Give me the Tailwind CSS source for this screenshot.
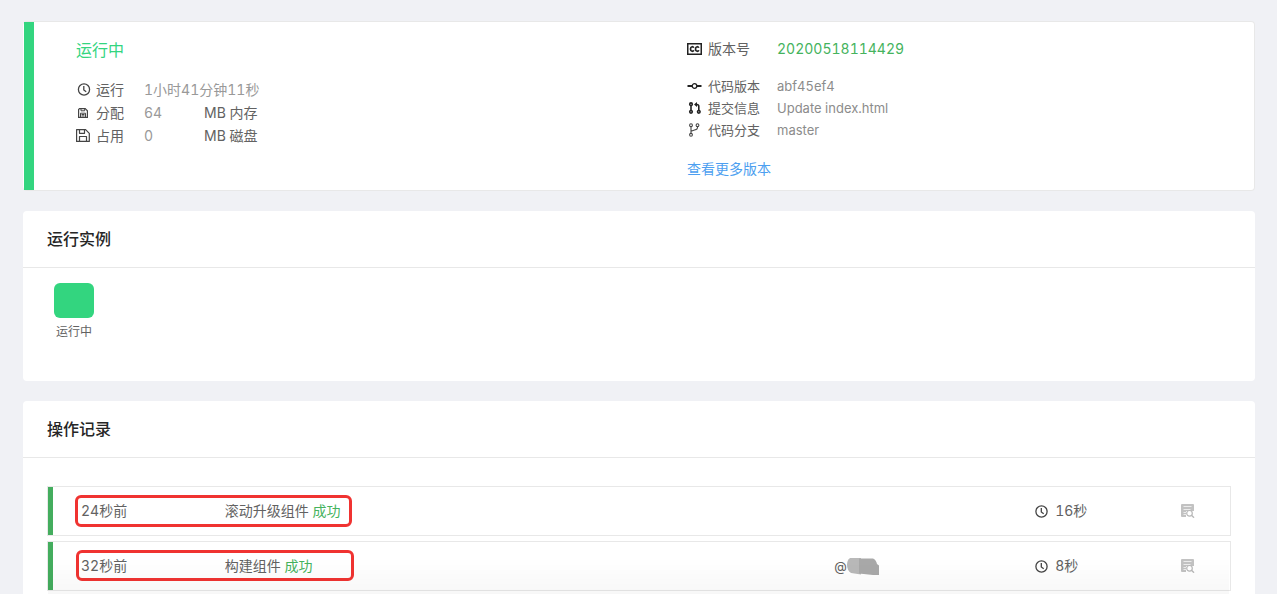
<!DOCTYPE html>
<html lang="zh-CN">
<head>
    <meta charset="UTF-8">
    <meta name="viewport" content="width=device-width, initial-scale=1.0">
    <title>运行实例</title>
    <script src="https://cdn.jsdelivr.net/npm/@tailwindcss/browser@4"></script>
</head>
<body class="bg-[#f0f1f5] font-['Inter','Noto_Sans_CJK_SC',sans-serif] text-sm tabular-nums text-[#626262]">

<!-- shared icons -->
<svg class="hidden">
    <symbol id="icon-clock" viewBox="0 0 13 13">
        <g fill="none" stroke="#444" stroke-width="1.300">
            <circle cx="6.500" cy="6.500" r="5.600"/>
            <path d="M6.300 3v4l2.400 1.800"/>
        </g>
    </symbol>
    <symbol id="icon-search-doc" viewBox="0 0 14 14">
        <path fill="#c2c2c2" d="M1 0h11a1 1 0 0 1 1 1v6H0V1a1 1 0 0 1 1-1zM0 6h5v7H1a1 1 0 0 1-1-1z"/>
        <path fill="none" stroke="#ececec" d="M2.500 2.500h8M2.500 5.500h7M2.500 8.500h2.500M2.500 10.500h2.500"/>
        <circle cx="8.500" cy="9.300" r="2.800" fill="#fff" stroke="#b8b8b8" stroke-width="1.200"/>
        <path fill="none" stroke="#b8b8b8" stroke-width="1.400" d="M10.500 11.300l2.500 2.400"/>
    </symbol>
</svg>

<main class="h-screen overflow-hidden pt-[21px] pl-[23px] pr-[22px] flex flex-col gap-5">

    <section class="shrink-0 grid grid-cols-2 bg-white border border-[#e8e8e8] border-l-0 rounded-sm relative pl-[11px] h-[170px]">
        <span class="absolute left-px inset-y-0 w-[10px] bg-[#33d57f]"></span>
        <div class="pl-[42px] pt-4">
            <h2 class="text-base leading-6 text-[#33d57f]">运行中</h2>
            <ul class="mt-4 leading-[23px]">
                <li class="flex items-center">
                    <svg class="w-4 h-[13px] mr-1"><use href="#icon-clock"/></svg>
                    <span class="w-12">运行</span>
                    <span class="text-[#999]">1小时41分钟11秒</span>
                </li>
                <li class="flex items-center">
                    <svg class="w-[14px] h-[10px] mr-[6px]" viewBox="0 0 10 10" fill="none" stroke="#444">
                        <path stroke-width="1.200" d="M1.500.600h5.700L9.400 2.800v6.600H.600V1.500z"/>
                        <path d="M3 .500v2.300h3.700V.500M2.500 9V5.200h5V9M3.500 6.500h3M3.500 7.900h3"/>
                    </svg>
                    <span class="w-12">分配</span>
                    <span class="w-[60px] text-[#999]">64</span>
                    <span>MB 内存</span>
                </li>
                <li class="flex items-center">
                    <svg class="w-[14px] h-[13px] mr-[6px]" viewBox="0 0 14 13" fill="none" stroke="#444" stroke-width="1.200" stroke-linejoin="round">
                        <path d="M.600.600h9l3.700 3.700v8.100H.600z"/>
                        <path d="M3.500.600v3.700h5V.600M3.500 12.400V7.500h7v4.900"/>
                    </svg>
                    <span class="w-12">占用</span>
                    <span class="w-[60px] text-[#999]">0</span>
                    <span>MB 磁盘</span>
                </li>
            </ul>
        </div>
        <div class="pl-[43px] pt-4">
            <div class="flex items-center leading-[22px]">
                <svg class="w-[15px] h-3 mr-[6px]" viewBox="0 0 15 12" fill="none">
                    <path stroke="#222" stroke-width="1.500" d="M.750.750h13.500v10.500H.750z"/>
                    <path stroke="#222" stroke-width="1.700" d="M6.600 4.900C6.500 3.300 3.500 3 3.500 6s3 2.700 3.100 1.100M11.600 4.900c-.1-1.600-3.100-1.900-3.100 1.100s3 2.700 3.100 1.100"/>
                </svg>
                <span class="w-[69px]">版本号</span>
                <span class="text-[#45b35d]">20200518114429</span>
            </div>
            <ul class="mt-[15px] text-[13px] leading-[22px]">
                <li class="flex items-center">
                    <svg class="w-[15px] h-3 mr-[6px]" viewBox="0 0 15 12" fill="none" stroke="#222">
                        <path stroke-width="1.800" d="M.500 6h4.500M10 6h4.500"/>
                        <circle cx="7.500" cy="6" r="2.300" stroke-width="1.300"/>
                    </svg>
                    <span class="w-[69px]">代码版本</span>
                    <span class="text-[#8c8c8c]">abf45ef4</span>
                </li>
                <li class="flex items-center">
                    <svg class="w-[15px] h-3 mr-[6px]" viewBox="0 0 15 12" fill="none" stroke="#222" stroke-width="1.600">
                        <path d="M4 3v6M8.500 2.500h1.300q2 0 2 2V9"/>
                        <circle cx="4" cy="2.200" r="1.300"/>
                        <circle cx="4" cy="9.800" r="1.300"/>
                        <circle cx="11.800" cy="9.800" r="1.300"/>
                        <path fill="#222" stroke="none" d="M10 0v5L7 2.500z"/>
                    </svg>
                    <span class="w-[69px]">提交信息</span>
                    <span class="text-[#8c8c8c]">Update index.html</span>
                </li>
                <li class="flex items-center">
                    <svg class="w-[15px] h-[14px] mr-[6px]" viewBox="0 0 15 14" fill="none" stroke="#444" stroke-width="1.100">
                        <circle cx="4" cy="2.200" r="1.400"/>
                        <circle cx="4" cy="11.800" r="1.400"/>
                        <circle cx="10.500" cy="2.200" r="1.400"/>
                        <path d="M4 3.600v6.800M10.500 3.600v1q0 1.600-1.600 2L4 8.200"/>
                    </svg>
                    <span class="w-[69px]">代码分支</span>
                    <span class="text-[#8c8c8c]">master</span>
                </li>
            </ul>
            <a href="#" class="inline-block mt-[17px] leading-[22px] text-[#4d9ff0]">查看更多版本</a>
        </div>
    </section>

    <section class="shrink-0 bg-white rounded-sm h-[170px]">
        <h2 class="px-6 py-4 border-b border-[#e8e8e8] text-base leading-6 font-medium text-[#262626]">运行实例</h2>
        <div class="px-[31px] pt-[15px]">
            <div class="w-10 flex flex-col items-center">
                <span class="w-10 h-[35px] rounded-md bg-[#33d57f]"></span>
                <span class="mt-1 text-xs leading-5 whitespace-nowrap">运行中</span>
            </div>
        </div>
    </section>

    <section class="flex-1 bg-white rounded-t-sm">
        <h2 class="px-6 py-4 border-b border-[#e8e8e8] text-base leading-6 font-medium text-[#262626]">操作记录</h2>
        <ul class="px-6 pt-7 flex flex-col gap-[5px]">
            <li class="relative grid grid-cols-[172fr_610fr_201fr_146fr_49fr] items-center h-[50px] pl-[5px] border border-[#e8e8e8]">
                <span class="absolute left-0 inset-y-0 w-[5px] bg-[#44ad5e]"></span>
                <span class="pl-7">24秒前</span>
                <span>滚动升级组件 <span class="text-[#45b35d]">成功</span></span>
                <span></span>
                <span class="flex items-center gap-[7px]"><svg class="w-[13px] h-[13px]"><use href="#icon-clock"/></svg>16秒</span>
                <button type="button" aria-label="查看日志" class="w-[14px]"><svg class="w-[14px] h-[14px]"><use href="#icon-search-doc"/></svg></button>
                <span class="absolute left-[27px] top-2 w-[277px] h-8 border-3 border-[#f03331] rounded-md"></span>
            </li>
            <li class="relative grid grid-cols-[172fr_610fr_201fr_146fr_49fr] items-center h-[50px] pl-[5px] border border-[#e8e8e8]">
                <span class="absolute left-0 inset-y-0 w-[5px] bg-[#44ad5e]"></span>
                <span class="pl-7">32秒前</span>
                <span>构建组件 <span class="text-[#45b35d]">成功</span></span>
                <span class="flex items-center text-[13px]">@<svg class="w-8 h-[19px]" viewBox="0 0 32 19">
                    <path fill="#b9b9b9" d="M3 1h11v16.500L4 16Q0 13 0 8T3 1z"/>
                    <path fill="#a9a9a9" d="M12 1.500h14q3 1 4 5.500l2 1.500V18H26l-14-1.500z"/>
                </svg></span>
                <span class="flex items-center gap-[7px]"><svg class="w-[13px] h-[13px]"><use href="#icon-clock"/></svg>8秒</span>
                <button type="button" aria-label="查看日志" class="w-[14px]"><svg class="w-[14px] h-[14px]"><use href="#icon-search-doc"/></svg></button>
                <span class="absolute left-7 top-2 w-[278px] h-[31px] border-3 border-[#f03331] rounded-md"></span>
            </li>
        </ul>
    </section>
</main>

<div class="fixed bottom-0 inset-x-12 h-9 bg-linear-to-b from-transparent to-black/3 pointer-events-none"></div>

</body>
</html>
